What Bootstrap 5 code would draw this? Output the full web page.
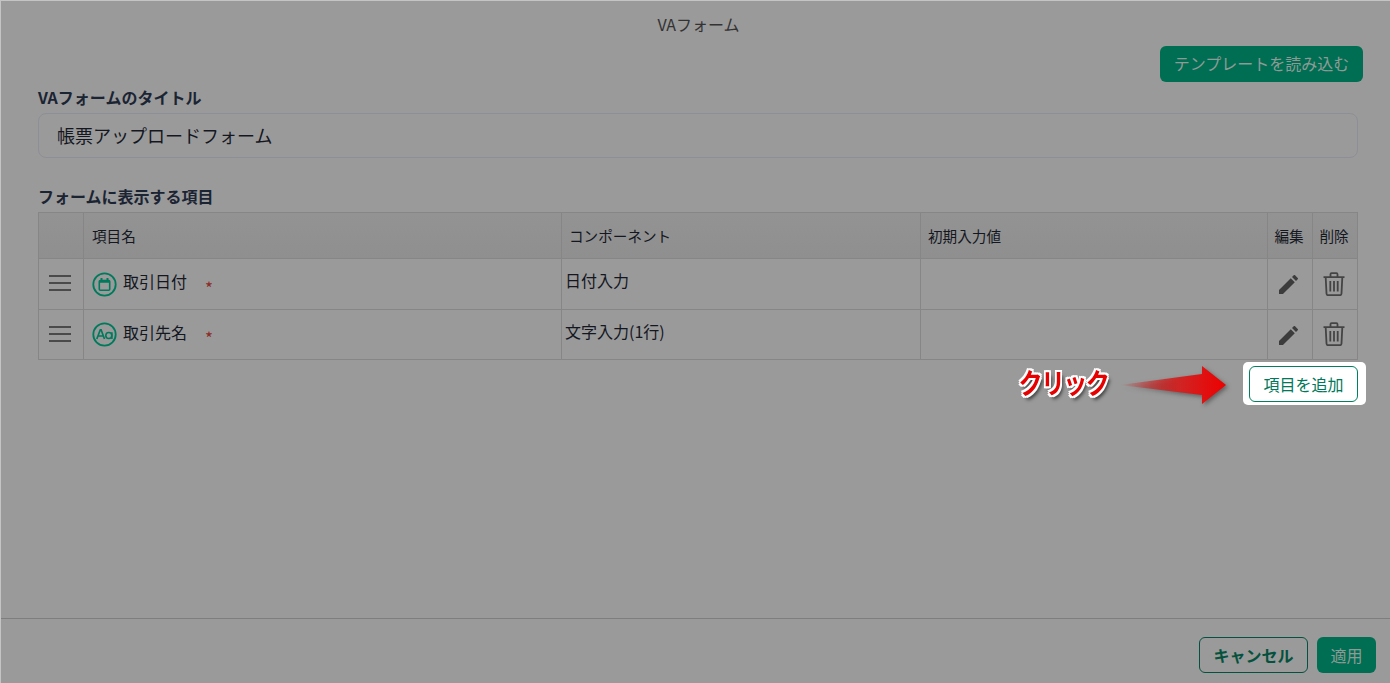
<!DOCTYPE html>
<html lang="ja">
<head>
<meta charset="utf-8">
<title>VAフォーム</title>
<link href="https://cdn.jsdelivr.net/npm/bootstrap@5.3.0/dist/css/bootstrap.min.css" rel="stylesheet">
<style>
html,body{height:100%;margin:0;}
body{background:#9a9a9a;font-family:"Noto Sans CJK JP","Liberation Sans",sans-serif;color:#14171f;font-size:14px;overflow:hidden;}
.pg{height:683px;border-top:1px solid #c4c4c4;border-left:1px solid #c4c4c4;}
.ttl{height:45px;padding-top:13px;color:#333;font-size:16px;line-height:20px;text-align:center;}
.ttl span{position:relative;left:3px;}
.sec{padding:0 32px 0 37px;}
.btn-tpl{background:#006e53;color:#8f9a96;border:0;border-radius:6px;height:36px;width:203px;font-size:16px;padding:0 0 2px;line-height:32px;}
.top-r{margin-right:-5px;}
.lbl{font-weight:700;font-size:16px;line-height:20px;color:#1b2433;margin-top:5px;margin-bottom:6px;}
.inp{height:45px;border:1px solid #8d8f96;border-radius:8px;padding:0 18px;display:flex;align-items:center;font-size:18px;color:#14171f;background:transparent;}
.lbl2{margin-top:28px;margin-bottom:6px;}
.tb{width:1319px;table-layout:fixed;border-collapse:collapse;border:1px solid #868686;margin:0;}
.tb th,.tb td{border:1px solid #868686;padding:0 7px;font-weight:400;font-size:14.600px;vertical-align:middle;color:#14171f;background:transparent;}
.tb th.nmh{padding-left:8px;}
.tb thead tr{height:46px;background:linear-gradient(#939393,#8f8f8f);}
.tb tbody tr.r1{height:51px;}
.tb tbody tr.r2{height:50px;}
.tb .ico{text-align:center;padding:0;}
.tb .hd{padding-right:2px;}
.tb .bars{padding:0 2px 6px 0;}
.tb .act{padding:0 3px 2px 0;}
.tb .act2{padding:0 2px 2px 0;}
.tb .ttx{padding:0 7px 2px 8px;font-size:16px;}
.tb .cmp{padding:0 0 8px 3px;font-size:16px;}
.tb .cmp2{padding-left:3px;}
.nm{display:flex;align-items:center;}
.nm svg{margin-right:6px;flex:none;margin-top:2px;}
.nmt{margin-bottom:4px;}
.req{color:#8c2a24;margin-left:18px;font-size:17px;line-height:17px;margin-top:8px;}
.add-row{display:flex;justify-content:flex-end;align-items:flex-start;margin-top:2px;height:43px;margin-right:-8px;}
.hl{background:#fff;border-radius:5px;padding:4px 8px 3px 6px;display:flex;}
.btn-add{background:#fff;color:#00785a;border:1px solid #00805f;border-radius:6px;width:109px;height:36px;padding:0;font-size:16px;line-height:34px;}
.clk{font-weight:700;font-size:28px;line-height:40px;color:#e60000;letter-spacing:-2px;text-shadow:-2px 0 #fff,2px 0 #fff,0 -2px #fff,0 2px #fff,-2px -2px #fff,2px 2px #fff,-2px 2px #fff,2px -2px #fff,3px 4px 4px #333;margin-right:12px;transform:scaleX(.86);transform-origin:right;}
.arr{margin:3px 17px 0 0;display:block;filter:drop-shadow(2px 2px 2px rgba(40,40,40,.5));}
.spacer{flex:1;}
.ft{border-top:1px solid #7e7e7e;height:65px;padding:18px 14px 0 0;display:flex;justify-content:flex-end;gap:9px;}
.btn-can{background:transparent;border:1px solid #04513d;color:#04513d;border-radius:6px;width:109px;height:36px;padding:0;font-weight:700;font-size:16px;line-height:34px;}
.btn-app{background:#006e53;border:0;color:#8f9a96;border-radius:6px;width:59px;height:36px;padding:0;font-size:16px;line-height:36px;}
</style>
</head>
<body>
<div class="pg d-flex flex-column">
  <div class="ttl"><span>VAフォーム</span></div>
  <div class="sec">
    <div class="d-flex justify-content-end top-r"><button class="btn btn-tpl" type="button">テンプレートを読み込む</button></div>
    <div class="lbl">VAフォームのタイトル</div>
    <div class="inp">帳票アップロードフォーム</div>
    <div class="lbl lbl2">フォームに表示する項目</div>
    <table class="table tb">
      <colgroup><col style="width:45px"><col style="width:478px"><col style="width:359px"><col style="width:347px"><col style="width:45px"><col style="width:45px"></colgroup>
      <thead><tr><th></th><th class="nmh">項目名</th><th>コンポーネント</th><th>初期入力値</th><th class="ico hd">編集</th><th class="ico hd">削除</th></tr></thead>
      <tbody>
        <tr class="r1">
          <td class="ico bars"><svg width="22" height="18" viewBox="0 0 22 18"><path d="M0 2h22M0 9h22M0 16h22" stroke="#4a4a4a" stroke-width="2"/></svg></td>
          <td class="ttx"><div class="nm"><svg width="25" height="25" viewBox="0 0 25 25"><circle cx="12.500" cy="12.500" r="11.200" fill="none" stroke="#007a5c" stroke-width="1.800"/><rect x="7.300" y="8.500" width="10.400" height="9.800" rx="1" fill="none" stroke="#007a5c" stroke-width="1.600"/><path d="M7.300 9.800h10.400M9.500 6v3.500M15.500 6v3.500" fill="none" stroke="#007a5c" stroke-width="2"/></svg><span class="nmt">取引日付</span><span class="req">*</span></div></td>
          <td class="cmp">日付入力</td><td></td>
          <td class="ico act"><svg width="19" height="19" viewBox="0 0 20 20"><path d="M0 20v-4.200L12.400 3.400l4.200 4.200L4.200 20zM13.700 2.100 15.500.3a1 1 0 0 1 1.400 0l2.800 2.800a1 1 0 0 1 0 1.400l-1.800 1.800z" fill="#3c3c3c"/></svg></td>
          <td class="ico act2"><svg width="22" height="24" viewBox="0 0 22 24"><path d="M.5 5.200h21M7.500 4.500V2.200a1 1 0 0 1 1-1h5a1 1 0 0 1 1 1v2.300" fill="none" stroke="#444" stroke-width="1.800"/><path d="M2.700 5.500l.8 16a1.800 1.800 0 0 0 1.800 1.700h11.400a1.800 1.800 0 0 0 1.800-1.700l.8-16" fill="none" stroke="#444" stroke-width="1.800"/><path d="M7.300 9v10.500M11 9v10.500M14.700 9v10.500" stroke="#444" stroke-width="1.800"/></svg></td>
        </tr>
        <tr class="r2">
          <td class="ico bars"><svg width="22" height="18" viewBox="0 0 22 18"><path d="M0 2h22M0 9h22M0 16h22" stroke="#4a4a4a" stroke-width="2"/></svg></td>
          <td class="ttx"><div class="nm"><svg width="25" height="25" viewBox="0 0 25 25"><circle cx="12.500" cy="12.500" r="11.200" fill="none" stroke="#007a5c" stroke-width="1.800"/><path d="M4.800 17 8.300 7.800h.8L12.500 17M6 14h5.300" fill="none" stroke="#007a5c" stroke-width="1.700"/><circle cx="16.800" cy="13.500" r="3" fill="none" stroke="#007a5c" stroke-width="1.600"/><path d="M19.900 10.200V17" stroke="#007a5c" stroke-width="1.600"/></svg><span class="nmt">取引先名</span><span class="req">*</span></div></td>
          <td class="cmp cmp2">文字入力(1行)</td><td></td>
          <td class="ico act"><svg width="19" height="19" viewBox="0 0 20 20"><path d="M0 20v-4.200L12.400 3.400l4.200 4.200L4.200 20zM13.700 2.100 15.500.3a1 1 0 0 1 1.400 0l2.800 2.800a1 1 0 0 1 0 1.400l-1.800 1.800z" fill="#3c3c3c"/></svg></td>
          <td class="ico act2"><svg width="22" height="24" viewBox="0 0 22 24"><path d="M.5 5.200h21M7.500 4.500V2.200a1 1 0 0 1 1-1h5a1 1 0 0 1 1 1v2.300" fill="none" stroke="#444" stroke-width="1.800"/><path d="M2.700 5.500l.8 16a1.800 1.800 0 0 0 1.800 1.700h11.400a1.800 1.800 0 0 0 1.800-1.700l.8-16" fill="none" stroke="#444" stroke-width="1.800"/><path d="M7.300 9v10.500M11 9v10.500M14.700 9v10.500" stroke="#444" stroke-width="1.800"/></svg></td>
        </tr>
      </tbody>
    </table>
    <div class="add-row">
      <span class="clk">クリック</span>
      <svg class="arr" width="106" height="40" viewBox="0 0 106 40"><defs><linearGradient id="g" x1="0" x2="1" y1="0" y2="0"><stop offset="0" stop-color="#e00000" stop-opacity="0"/><stop offset=".55" stop-color="#cf2525"/><stop offset="1" stop-color="#ee0000"/></linearGradient></defs><path d="M0 20 82 9V1L106 20 82 39V30Z" fill="url(#g)"/></svg>
      <div class="hl"><button class="btn btn-add" type="button">項目を追加</button></div>
    </div>
  </div>
  <div class="spacer"></div>
  <div class="ft"><button class="btn btn-can" type="button">キャンセル</button><button class="btn btn-app" type="button">適用</button></div>
</div>
<script src="https://cdn.jsdelivr.net/npm/bootstrap@5.3.0/dist/js/bootstrap.bundle.min.js"></script>
</body>
</html>
